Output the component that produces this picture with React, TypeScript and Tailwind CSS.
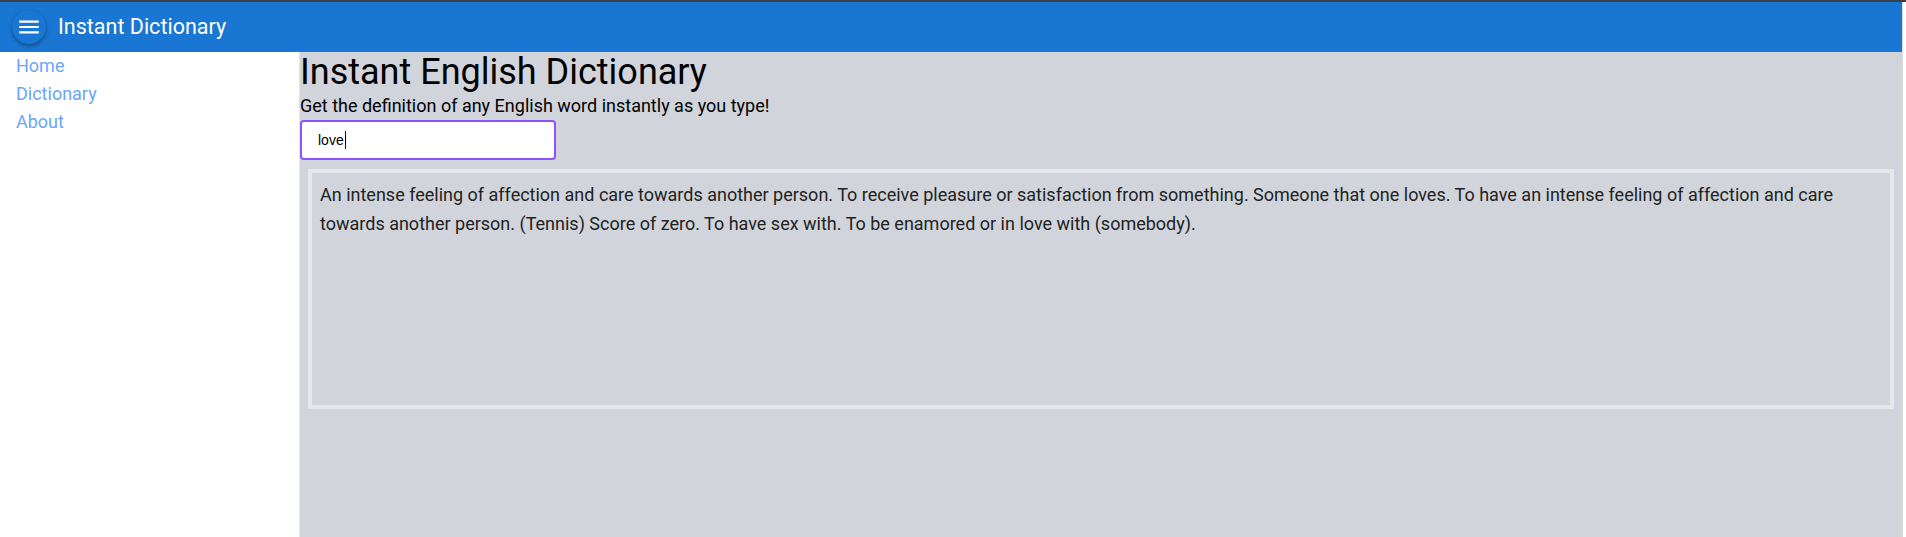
import React from "react";

const definition =
  "An intense feeling of affection and care towards another person. To receive pleasure or satisfaction from something. Someone that one loves. To have an intense feeling of affection and care towards another person. (Tennis) Score of zero. To have sex with. To be enamored or in love with (somebody).";

export default function App() {
  return (
    <div
      className="flex h-screen w-full flex-col overflow-hidden bg-white"
      style={{ fontFamily: "Roboto, 'Noto Sans', sans-serif" }}
    >
      <div className="h-[2px] w-full shrink-0 bg-[#3c3f44]" />
      <div className="flex min-h-0 flex-1">
        <div className="flex min-w-0 flex-1 flex-col">
          <header className="flex h-[50px] shrink-0 items-center bg-[#1976d2]">
            <button className="ml-[12px] flex h-[34px] w-[34px] items-center justify-center rounded-full bg-[#1976d2] shadow-[0_2px_4px_rgba(0,0,0,0.35)]">
              <svg width="26" height="26" viewBox="0 0 24 24" fill="white">
                <path d="M3 18h18v-2H3v2zm0-5h18v-2H3v2zm0-7v2h18V6H3z" />
              </svg>
            </button>
            <span className="ml-[12px] text-[21.5px] leading-none text-white">
              Instant Dictionary
            </span>
          </header>
          <div className="flex min-h-0 flex-1">
            <nav className="flex w-[299px] shrink-0 flex-col bg-white pl-[16px]">
              <a className="text-[18px] leading-[28px] text-[#6aa5f8]" href="#">
                Home
              </a>
              <a className="text-[18px] leading-[28px] text-[#6aa5f8]" href="#">
                Dictionary
              </a>
              <a className="text-[18px] leading-[28px] text-[#6aa5f8]" href="#">
                About
              </a>
            </nav>
            <main className="flex min-w-0 flex-1 flex-col border-l border-[#e3e5e9] bg-[#d1d5db]">
              <h1 className="text-[36px] leading-[40px] text-black">
                Instant English Dictionary
              </h1>
              <p className="text-[18px] leading-[28px] text-black">
                Get the definition of any English word instantly as you type!
              </p>
              <div className="flex h-[40px] w-[256px] items-center rounded-[4px] border-2 border-violet-500 bg-white pl-[16px]">
                <span
                  className="text-[14px] text-black"
                  style={{ fontFamily: "'Liberation Sans', Arial, sans-serif" }}
                >
                  love
                </span>
                <span className="ml-px inline-block h-[18px] w-px bg-black" />
              </div>
              <div className="mx-2 mt-[9px] h-[240px] border-4 border-gray-200 p-2">
                <p className="text-[18px] leading-[28.8px] text-[#222222]">{definition}</p>
              </div>
            </main>
          </div>
        </div>
        <div className="w-[4px] shrink-0 border-l border-[#dcdcdc] bg-white" />
      </div>
    </div>
  );
}
